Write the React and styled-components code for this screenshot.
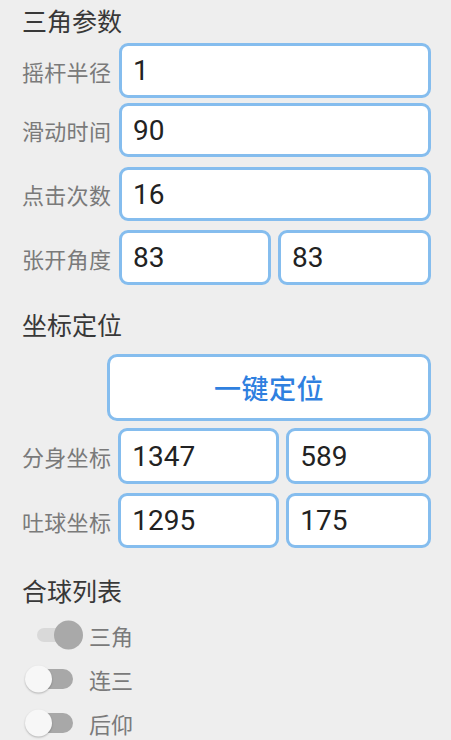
import React from "react";
import styled, { createGlobalStyle } from "styled-components";

const GlobalStyle = createGlobalStyle`
  html, body {
    margin: 0;
    padding: 0;
    background: #eeeeee;
  }
  body {
    font-family: Roboto, "Noto Sans CJK SC", sans-serif;
  }
`;

const Page = styled.div`
  display: flex;
  flex-direction: column;
  padding: 0 20px 0 22px;
  box-sizing: border-box;
  width: 451px;
  min-height: 740px;
  background: #eeeeee;
`;

const Heading = styled.div`
  font-family: "Noto Sans CJK SC", sans-serif;
  font-size: 25px;
  line-height: 34px;
  height: 34px;
  color: #383838;
  margin-top: ${(p) => p.$top}px;
`;

const Row = styled.div`
  display: flex;
  align-items: center;
  height: ${(p) => p.$h}px;
  margin-top: ${(p) => p.$top}px;
  gap: 7px;
`;

const Label = styled.div`
  flex: 0 0 ${(p) => p.$w || 90}px;
  margin-right: ${(p) => (p.$w ? 0 : 0)}px;
  font-family: "Noto Sans CJK SC", sans-serif;
  font-size: 22px;
  color: #7a7a7a;
  white-space: nowrap;
  letter-spacing: 0.3px;
`;

const Field = styled.div`
  flex: 0 0 ${(p) => p.$w}px;
  height: 100%;
  box-sizing: border-box;
  border: 3px solid #85bdee;
  border-radius: 9px;
  background: #ffffff;
  display: flex;
  align-items: center;
  padding-left: 11px;
  font-family: Roboto, sans-serif;
  font-size: 28px;
  color: #222222;
`;

const Button = styled.div`
  margin-top: 13px;
  margin-left: 85px;
  height: 67px;
  box-sizing: border-box;
  border: 3px solid #85bdee;
  border-radius: 10px;
  background: #ffffff;
  display: flex;
  align-items: center;
  justify-content: center;
  font-family: "Noto Sans CJK SC", sans-serif;
  font-size: 27px;
  font-weight: 500;
  color: #2f80df;
  letter-spacing: 0.5px;
`;

const SwitchRow = styled.div`
  display: flex;
  align-items: center;
  height: 44px;
  margin-top: ${(p) => p.$top || 0}px;
  padding-left: 3px;
  gap: 6px;
`;

const SwitchBox = styled.div`
  position: relative;
  width: 58px;
  height: 30px;
  flex: 0 0 58px;
`;

const Track = styled.div`
  position: absolute;
  left: 12px;
  width: 36px;
  top: 50%;
  height: ${(p) => (p.$on ? 14 : 20)}px;
  transform: translateY(-50%);
  border-radius: 10px;
  background: ${(p) => (p.$on ? "#d9d9d9" : "#a8a8a8")};
`;

const Thumb = styled.div`
  position: absolute;
  top: 50%;
  transform: translateY(-50%);
  width: ${(p) => (p.$on ? 29 : 27)}px;
  height: ${(p) => (p.$on ? 29 : 27)}px;
  border-radius: 50%;
  ${(p) => (p.$on ? "right: 0;" : "left: 0;")}
  background: ${(p) => (p.$on ? "#a9a9a9" : "#f7f7f7")};
  box-shadow: ${(p) => (p.$on ? "none" : "0 1px 2px rgba(0,0,0,0.25)")};
`;

const SwitchLabel = styled.div`
  font-family: "Noto Sans CJK SC", sans-serif;
  font-size: 22px;
  color: #7a7a7a;
`;

function Switch({ on, label, top }) {
  return (
    <SwitchRow $top={top}>
      <SwitchBox>
        <Track $on={on} />
        <Thumb $on={on} />
      </SwitchBox>
      <SwitchLabel>{label}</SwitchLabel>
    </SwitchRow>
  );
}

export default function App() {
  return (
    <>
      <GlobalStyle />
      <Page>
        <Heading $top={3}>三角参数</Heading>
        <Row $h={55} $top={6}>
          <Label $w={90}>摇杆半径</Label>
          <Field $w={312}>1</Field>
        </Row>
        <Row $h={54} $top={5}>
          <Label $w={90}>滑动时间</Label>
          <Field $w={312}>90</Field>
        </Row>
        <Row $h={54} $top={10}>
          <Label $w={90}>点击次数</Label>
          <Field $w={312}>16</Field>
        </Row>
        <Row $h={55} $top={9}>
          <Label $w={90}>张开角度</Label>
          <Field $w={152}>83</Field>
          <Field $w={153}>83</Field>
        </Row>

        <Heading $top={22}>坐标定位</Heading>
        <Button>一键定位</Button>
        <Row $h={56} $top={7}>
          <Label $w={89}>分身坐标</Label>
          <Field $w={161}>1347</Field>
          <Field $w={145}>589</Field>
        </Row>
        <Row $h={55} $top={9}>
          <Label $w={89}>吐球坐标</Label>
          <Field $w={161}>1295</Field>
          <Field $w={145}>175</Field>
        </Row>

        <Heading $top={25}>合球列表</Heading>
        <Switch on label="三角" top={6} />
        <Switch label="连三" />
        <Switch label="后仰" />
      </Page>
    </>
  );
}
